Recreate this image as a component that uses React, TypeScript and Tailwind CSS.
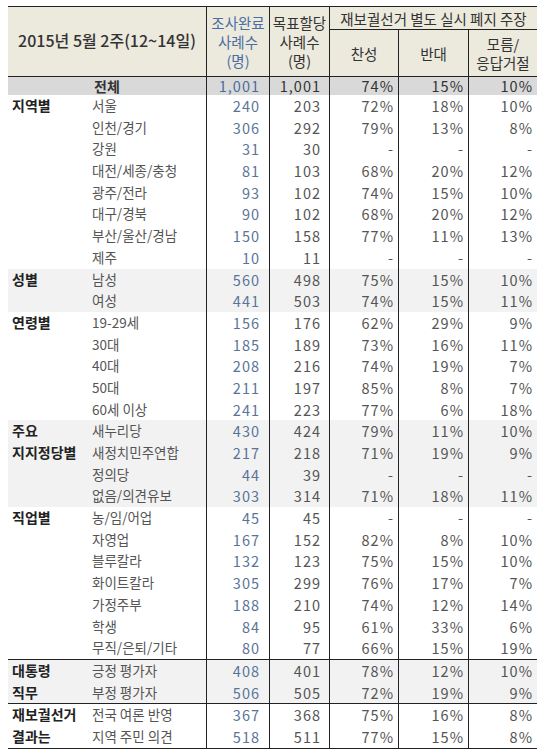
import React from 'react';

type Row = { sub: string; a: string; b: string; y: string; n: string; d: string };
type Group = { label: string[]; bg: string; top?: boolean; rows: Row[] };

const r = (sub: string, a: string, b: string, y: string, n: string, d: string): Row => ({ sub, a, b, y, n, d });

const groups: Group[] = [
  {
    label: ['지역별'],
    bg: 'bg-white',
    rows: [
      r('서울', '240', '203', '72%', '18%', '10%'),
      r('인천/경기', '306', '292', '79%', '13%', '8%'),
      r('강원', '31', '30', '-', '-', '-'),
      r('대전/세종/충청', '81', '103', '68%', '20%', '12%'),
      r('광주/전라', '93', '102', '74%', '15%', '10%'),
      r('대구/경북', '90', '102', '68%', '20%', '12%'),
      r('부산/울산/경남', '150', '158', '77%', '11%', '13%'),
      r('제주', '10', '11', '-', '-', '-'),
    ],
  },
  {
    label: ['성별'],
    bg: 'bg-[#f2f2f2]',
    rows: [
      r('남성', '560', '498', '75%', '15%', '10%'),
      r('여성', '441', '503', '74%', '15%', '11%'),
    ],
  },
  {
    label: ['연령별'],
    bg: 'bg-white',
    rows: [
      r('19-29세', '156', '176', '62%', '29%', '9%'),
      r('30대', '185', '189', '73%', '16%', '11%'),
      r('40대', '208', '216', '74%', '19%', '7%'),
      r('50대', '211', '197', '85%', '8%', '7%'),
      r('60세 이상', '241', '223', '77%', '6%', '18%'),
    ],
  },
  {
    label: ['주요', '지지정당별'],
    bg: 'bg-[#f2f2f2]',
    rows: [
      r('새누리당', '430', '424', '79%', '11%', '10%'),
      r('새정치민주연합', '217', '218', '71%', '19%', '9%'),
      r('정의당', '44', '39', '-', '-', '-'),
      r('없음/의견유보', '303', '314', '71%', '18%', '11%'),
    ],
  },
  {
    label: ['직업별'],
    bg: 'bg-white',
    rows: [
      r('농/임/어업', '45', '45', '-', '-', '-'),
      r('자영업', '167', '152', '82%', '8%', '10%'),
      r('블루칼라', '132', '123', '75%', '15%', '10%'),
      r('화이트칼라', '305', '299', '76%', '17%', '7%'),
      r('가정주부', '188', '210', '74%', '12%', '14%'),
      r('학생', '84', '95', '61%', '33%', '6%'),
      r('무직/은퇴/기타', '80', '77', '66%', '15%', '19%'),
    ],
  },
  {
    label: ['대통령', '직무'],
    bg: 'bg-[#f2f2f2]',
    top: true,
    rows: [
      r('긍정 평가자', '408', '401', '78%', '12%', '10%'),
      r('부정 평가자', '506', '505', '72%', '19%', '9%'),
    ],
  },
  {
    label: ['재보궐선거', '결과는'],
    bg: 'bg-white',
    top: true,
    rows: [
      r('전국 여론 반영', '367', '368', '75%', '16%', '8%'),
      r('지역 주민 의견', '518', '511', '77%', '15%', '8%'),
    ],
  },
];

const cols = 'grid grid-cols-[80px_118px_63px_60px_69px_70px_69px]';
const line = 'border-l-[1.5px] border-[#222]';

export default function App() {
  return (
    <div className="min-h-[751px] w-[550px] bg-white pl-[8px] pt-[6px] font-['Noto_Sans_CJK_KR','Noto_Sans',sans-serif]">
      <div className="w-[529px] border-t-[1.5px] border-b-[1.5px] border-[#222]">
        {/* header */}
        <div className={`${cols} grid-rows-[23px_46px] bg-[#ece9dd] text-[14.5px] leading-[19px] border-b-[1.5px] border-[#222]`}>
          <div className="col-span-2 row-span-2 flex items-center justify-center pb-[2px] text-[16px] font-medium text-[#333]">
            2015년 5월 2주(12~14일)
          </div>
          <div className={`row-span-2 flex flex-col items-center justify-center text-[#4a6da3] ${line}`}>
            <span>조사완료</span>
            <span>사례수</span>
            <span>(명)</span>
          </div>
          <div className={`row-span-2 flex flex-col items-center justify-center text-[#333] ${line}`}>
            <span>목표할당</span>
            <span>사례수</span>
            <span>(명)</span>
          </div>
          <div className={`col-span-3 flex items-center justify-center text-[#333] border-b-[1.5px] ${line}`}>
            재보궐선거 별도 실시 폐지 주장
          </div>
          <div className={`flex items-center justify-center text-[#333] ${line}`}>찬성</div>
          <div className={`flex items-center justify-center text-[#333] ${line}`}>반대</div>
          <div className={`flex flex-col items-center justify-center text-[#333] ${line}`}>
            <span>모름/</span>
            <span>응답거절</span>
          </div>
        </div>

        {/* total */}
        <div className={`${cols} h-[18px] bg-[#d9d9d9] text-[14.5px] leading-[18px] tracking-[1px] text-[#333]`}>
          <div className="col-span-2 text-center font-bold text-[14px] tracking-normal">전체</div>
          <div className={`pr-[9px] text-right text-[#4a6d9c] ${line}`}>1,001</div>
          <div className={`pr-[8px] text-right ${line}`}>1,001</div>
          <div className={`pr-[4px] text-right ${line}`}>74%</div>
          <div className={`pr-[4px] text-right ${line}`}>15%</div>
          <div className={`pr-[4px] text-right ${line}`}>10%</div>
        </div>

        {/* body */}
        {groups.map((g) => (
          <div key={g.label.join('')} className={`${g.bg} ${g.top ? 'border-t-[1.5px] border-[#222]' : ''}`}>
            {g.rows.map((row, i) => (
              <div key={row.sub} className={`${cols} h-[21.7px] text-[14.5px] leading-[21px] tracking-[1px] text-[#555]`}>
                <div className="pl-[4px] text-[14px] font-bold tracking-normal text-[#222]">{g.label[i] ?? ''}</div>
                <div className="pl-[4px] text-[13.5px] tracking-normal whitespace-nowrap">{row.sub}</div>
                <div className={`pr-[9px] text-right text-[#5a7499] ${line}`}>{row.a}</div>
                <div className={`pr-[8px] text-right ${line}`}>{row.b}</div>
                <div className={`pr-[4px] text-right ${line}`}>{row.y}</div>
                <div className={`pr-[4px] text-right ${line}`}>{row.n}</div>
                <div className={`pr-[4px] text-right ${line}`}>{row.d}</div>
              </div>
            ))}
          </div>
        ))}
      </div>
    </div>
  );
}
